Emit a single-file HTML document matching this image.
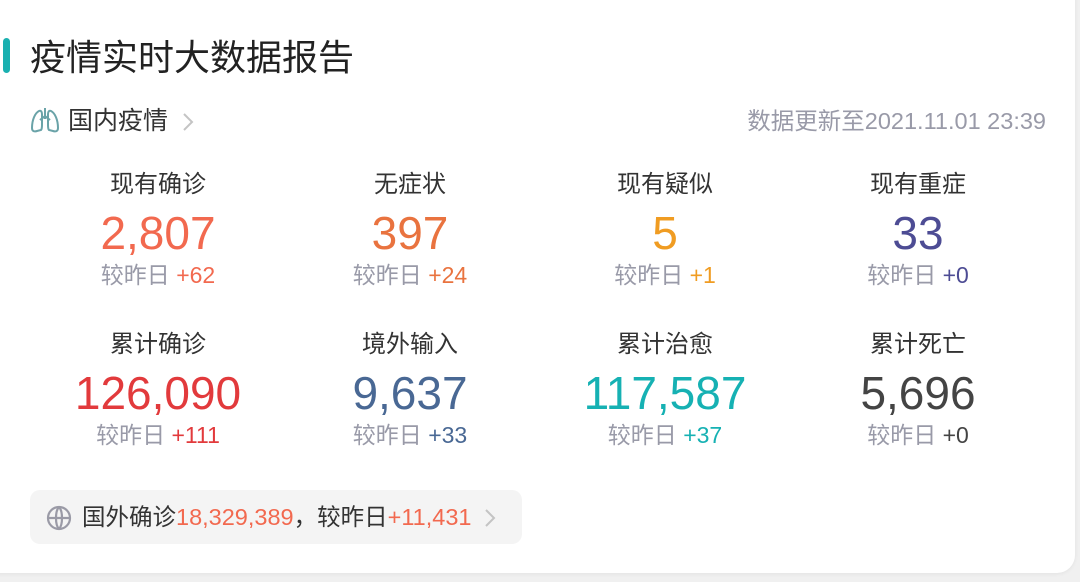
<!DOCTYPE html><html><head><meta charset="utf-8"><style>
body{margin:0;width:1080px;height:582px;background:#f0f0f0;overflow:hidden;font-family:"Liberation Sans","Noto Sans CJK SC",sans-serif;}
.card{position:absolute;left:-20px;top:-20px;width:1095px;height:593px;background:#fff;border-radius:18px;box-shadow:0 1px 4px rgba(0,0,0,.06);}
.a{position:absolute;}
.bar{left:3px;top:38px;width:7px;height:35px;background:#1ab0b0;border-radius:4px;}
.t{left:30px;top:35px;font-size:36px;color:#222;line-height:46px;}
.c{position:absolute;width:300px;height:120px;}
.c div{position:absolute;left:0;width:300px;text-align:center;}
.l{font-size:24px;color:#333;line-height:30px;top:2px;}
.n{font-size:46px;line-height:52px;top:39px;}
.d{font-size:23px;color:#999aa8;line-height:28px;top:93px;}
</style></head><body><div class="card"></div>
<div class="a bar"></div>
<div class="a t">疫情实时大数据报告</div>
<svg class="a" style="left:30px;top:106px" width="30" height="28" viewBox="0 0 30 28" fill="none" stroke="#6aa3a8" stroke-width="2"><path d="M15 2v11M15 10c-2 2-4 3-5 4M15 10c2 2 4 3 5 4"/><path d="M9 5C5 7 2 14 2 22c0 3 2 4 5 3l4-1c1-1 1-3 1-5V8c0-2-1-4-3-3z"/><path d="M21 5c4 2 7 9 7 17 0 3-2 4-5 3l-4-1c-1-1-1-3-1-5V8c0-2 1-4 3-3z"/></svg>
<div class="a" style="left:68px;top:106px;font-size:25px;color:#333;line-height:30px">国内疫情</div>
<svg class="a" style="left:180px;top:111px" width="16" height="22" viewBox="0 0 16 22" fill="none" stroke="#c4c4c4" stroke-width="2"><path d="M4 3l8 8-8 8"/></svg>
<div class="a" style="right:34px;top:107px;font-size:23.5px;color:#999aa8;line-height:28px">数据更新至2021.11.01 23:39</div>

<div class="c" style="left:8px;top:168px"><div class="l">现有确诊</div><div class="n" style="color:#f2694f">2,807</div><div class="d">较昨日 <span style="color:#f2694f">+62</span></div></div>
<div class="c" style="left:260px;top:168px"><div class="l">无症状</div><div class="n" style="color:#e9733f">397</div><div class="d">较昨日 <span style="color:#e9733f">+24</span></div></div>
<div class="c" style="left:515px;top:168px"><div class="l">现有疑似</div><div class="n" style="color:#f09c22">5</div><div class="d">较昨日 <span style="color:#f09c22">+1</span></div></div>
<div class="c" style="left:768px;top:168px"><div class="l">现有重症</div><div class="n" style="color:#4d4c94">33</div><div class="d">较昨日 <span style="color:#4d4c94">+0</span></div></div>

<div class="c" style="left:8px;top:328px"><div class="l">累计确诊</div><div class="n" style="color:#e23a3c">126,090</div><div class="d">较昨日 <span style="color:#e23a3c">+111</span></div></div>
<div class="c" style="left:260px;top:328px"><div class="l">境外输入</div><div class="n" style="color:#496894">9,637</div><div class="d">较昨日 <span style="color:#496894">+33</span></div></div>
<div class="c" style="left:515px;top:328px"><div class="l">累计治愈</div><div class="n" style="color:#16b1b3">117,587</div><div class="d">较昨日 <span style="color:#16b1b3">+37</span></div></div>
<div class="c" style="left:768px;top:328px"><div class="l">累计死亡</div><div class="n" style="color:#444">5,696</div><div class="d">较昨日 <span style="color:#444">+0</span></div></div>

<div class="a" style="left:30px;top:490px;width:492px;height:54px;background:#f4f4f4;border-radius:10px"></div>
<svg class="a" style="left:46px;top:505px" width="26" height="26" viewBox="0 0 26 26" fill="none" stroke="#9a9aa6" stroke-width="2.2"><circle cx="13" cy="13" r="11"/><path d="M2 13h22M13 2c-4 4-4 18 0 22M13 2c4 4 4 18 0 22"/></svg>
<div class="a" style="left:82px;top:503px;font-size:23.5px;line-height:28px;color:#333">国外确诊<span style="color:#f2694f">18,329,389</span>，较昨日<span style="color:#f2694f">+11,431</span></div>
<svg class="a" style="left:482px;top:507px" width="16" height="22" viewBox="0 0 16 22" fill="none" stroke="#c4c4c4" stroke-width="2"><path d="M4 3l8 8-8 8"/></svg>
</body></html>
